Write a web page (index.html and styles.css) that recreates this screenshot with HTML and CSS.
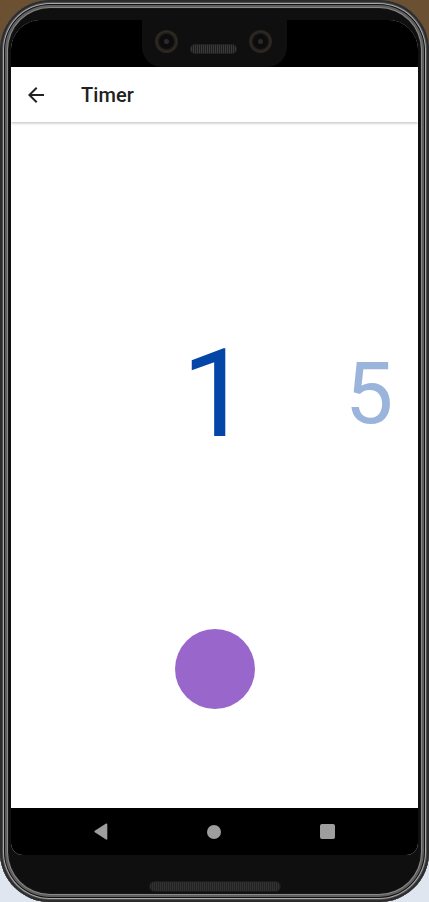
FILE: index.html
```html
<!DOCTYPE html>
<html lang="en">
<head>
<meta charset="utf-8">
<title>Timer</title>
<link rel="stylesheet" href="styles.css">
</head>
<body>
<div class="phone">
  <div class="screen">
    <div class="status">
      <div class="ear ear-left"></div>
      <div class="notch">
        <span class="camera"></span>
        <span class="speaker"></span>
        <span class="camera"></span>
      </div>
      <div class="ear ear-right"></div>
    </div>
    <header class="appbar">
      <svg class="back" viewBox="0 0 24 24" width="24" height="24" aria-hidden="true">
        <path d="M20 11H7.83l5.59-5.59L12 4l-8 8 8 8 1.41-1.41L7.83 13H20v-2z" fill="#212121"/>
      </svg>
      <h1 class="title">Timer</h1>
    </header>
    <main class="content">
      <div class="pager">
        <span class="num current">1</span>
        <span class="num next">5</span>
      </div>
      <button class="fab" aria-label="Start"></button>
    </main>
    <nav class="navbar">
      <svg class="nav-back" viewBox="0 0 14 17" width="14" height="17" aria-hidden="true">
        <path d="M12.5 1.2 L1.2 8.5 L12.5 15.8 Z" fill="#9e9e9e" stroke="#9e9e9e" stroke-width="1.6" stroke-linejoin="round"/>
      </svg>
      <span class="nav-home"></span>
      <span class="nav-recent"></span>
    </nav>
  </div>
  <div class="chin"><span class="grille"></span></div>
</div>
</body>
</html>
```

FILE: styles.css
```css
html, body {
  margin: 0;
  padding: 0;
}

body {
  width: 429px;
  height: 902px;
  overflow: hidden;
  background: linear-gradient(180deg, #6b5032 0%, #6b5032 40%, #dfe6ef 60%, #dfe6ef 100%);
  font-family: Roboto, "Noto Sans", "Liberation Sans", sans-serif;
}

.phone {
  box-sizing: border-box;
  width: 429px;
  height: 902px;
  padding: 20px 11px 0;
  display: flex;
  flex-direction: column;
  border-radius: 50px;
  background: #0f0f0f;
  box-shadow:
    inset 0 0 0 2px #2c2c2c,
    inset 0 0 0 3px #4e4e4e,
    inset 0 0 0 4px #a9a9a9,
    inset 0 0 0 5px #121212,
    inset 0 0 0 7px #5f5f5f,
    inset 0 0 0 8px #888888,
    inset 0 0 0 9px #161616;
}

.screen {
  flex: 0 0 835px;
  display: flex;
  flex-direction: column;
  background: #ffffff;
  border-radius: 30px 30px 12px 12px;
  overflow: hidden;
}

/* status / notch area */
.status {
  flex: 0 0 47px;
  display: flex;
  background: #000;
}

.ear {
  flex: 1;
  background: #000;
}

.ear-left {
  border-top-left-radius: 30px;
}

.ear-right {
  border-top-right-radius: 30px;
}

.notch {
  width: 145px;
  display: flex;
  align-items: flex-start;
  box-sizing: border-box;
  padding-left: 13px;
  gap: 13px;
  background: #0f0f0f;
  border-radius: 0 0 20px 20px;
}

.camera {
  width: 23px;
  height: 23px;
  margin-top: 10px;
  border-radius: 50%;
  background:
    radial-gradient(circle at 50% 50%, #2a2a2a 0 2px, #0c0c0c 3px 7px, #1c1b18 8px, #2f2b24 10px, #252119 11.5px);
}

.speaker {
  width: 45px;
  height: 8px;
  margin-top: 25px;
  border-radius: 4px;
  background:
    repeating-linear-gradient(90deg, #3a3a3a 0 1px, #1e1e1e 1px 2px),
    #2a2a2a;
  box-shadow: 0 0 0 1px #222;
}

/* app bar */
.appbar {
  position: relative;
  z-index: 1;
  flex: 0 0 55px;
  display: flex;
  align-items: center;
  padding-left: 13px;
  background: #fff;
  box-shadow: 0 1px 3px rgba(0, 0, 0, 0.28);
}

.back {
  display: block;
  flex: 0 0 24px;
}

.title {
  margin: 0 0 0 33px;
  font-size: 20px;
  font-weight: 500;
  color: #212121;
  letter-spacing: 0.1px;
}

/* content */
.content {
  flex: 1;
  display: flex;
  flex-direction: column;
  align-items: center;
  background: #fff;
}

.pager {
  align-self: stretch;
  height: 160px;
  margin-top: 192px;
  display: flex;
  align-items: center;
  padding-left: 141px;
}

.num {
  display: block;
  line-height: 1;
  color: #0446a8;
}

.current {
  width: 128px;
  text-align: center;
  font-size: 123px;
}

.next {
  margin-left: 65px;
  font-size: 86px;
  opacity: 0.4;
}

.fab {
  width: 80px;
  height: 80px;
  margin-top: 155px;
  padding: 0;
  border: none;
  border-radius: 50%;
  background: #9966cc;
}

/* nav bar */
.navbar {
  flex: 0 0 47px;
  display: flex;
  align-items: center;
  justify-content: center;
  gap: 99px;
  background: #000;
}

.nav-back {
  display: block;
}

.nav-home {
  width: 14px;
  height: 14px;
  border-radius: 50%;
  background: #9e9e9e;
}

.nav-recent {
  width: 15px;
  height: 15px;
  border-radius: 2px;
  background: #9e9e9e;
}

/* chin */
.chin {
  flex: 1;
  display: flex;
  justify-content: center;
  padding-top: 27px;
}

.grille {
  width: 130px;
  height: 9px;
  border-radius: 5px;
  background:
    repeating-linear-gradient(90deg, #333 0 1px, #222 1px 2px),
    #2a2a2a;
  box-shadow: 0 0 0 1px #1c1c1c;
}
```
